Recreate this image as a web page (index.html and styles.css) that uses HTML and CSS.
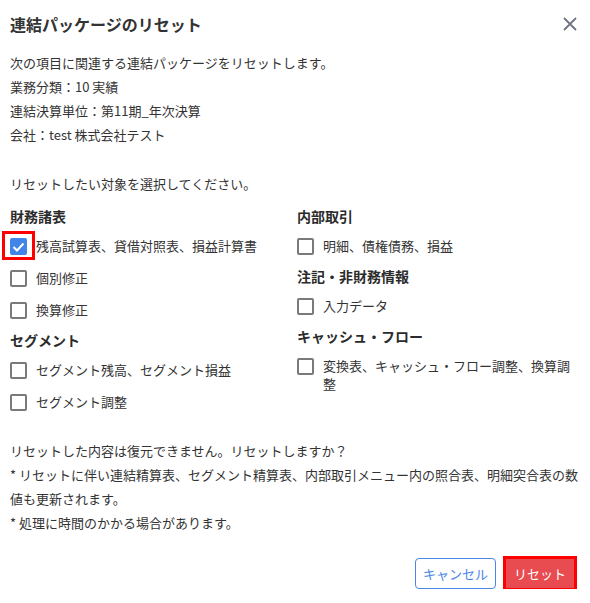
FILE: index.html
```html
<!doctype html>
<html lang="ja">
 <head>
  <meta charset="utf-8">
  <title>連結パッケージのリセット</title>
  <link rel="stylesheet" href="styles.css">
 </head>
 <body>
  <div class="dialog">
   <div class="dialog-header">
    <h1 class="dialog-title">連結パッケージのリセット</h1>
    <button class="dialog-close" type="button" aria-label="閉じる">
     <svg width="14" height="14" viewBox="0 0 14 14"><path d="M1 1L13 13M13 1L1 13" stroke="#6e7385" stroke-width="1.8" fill="none"/></svg>
    </button>
   </div>

   <div class="dialog-body">
    <p class="info">
     次の項目に関連する連結パッケージをリセットします。<br>
     業務分類：10 実績<br>
     連結決算単位：第11期_年次決算<br>
     会社：test 株式会社テスト
    </p>

    <p class="lead">リセットしたい対象を選択してください。</p>

    <div class="targets">
     <div class="target-col">
      <h2 class="group-title">財務諸表</h2>
      <label class="check-row">
       <span class="checkbox is-checked is-marked"><svg width="13" height="10" viewBox="0 0 13 10"><path d="M1.5 5L5 8.5L11.5 1.5" stroke="#fff" stroke-width="2" fill="none"/></svg></span>
       <span class="check-label">残高試算表、貸借対照表、損益計算書</span>
      </label>
      <label class="check-row">
       <span class="checkbox"></span>
       <span class="check-label">個別修正</span>
      </label>
      <label class="check-row">
       <span class="checkbox"></span>
       <span class="check-label">換算修正</span>
      </label>

      <h2 class="group-title">セグメント</h2>
      <label class="check-row">
       <span class="checkbox"></span>
       <span class="check-label">セグメント残高、セグメント損益</span>
      </label>
      <label class="check-row">
       <span class="checkbox"></span>
       <span class="check-label">セグメント調整</span>
      </label>
     </div>

     <div class="target-col">
      <h2 class="group-title">内部取引</h2>
      <label class="check-row">
       <span class="checkbox"></span>
       <span class="check-label">明細、債権債務、損益</span>
      </label>

      <h2 class="group-title">注記・非財務情報</h2>
      <label class="check-row">
       <span class="checkbox"></span>
       <span class="check-label">入力データ</span>
      </label>

      <h2 class="group-title">キャッシュ・フロー</h2>
      <label class="check-row">
       <span class="checkbox"></span>
       <span class="check-label">変換表、キャッシュ・フロー調整、換算調整</span>
      </label>
     </div>
    </div>

    <p class="notice">
     リセットした内容は復元できません。リセットしますか？<br>
     * リセットに伴い連結精算表、セグメント精算表、内部取引メニュー内の照合表、明細突合表の数値も更新されます。<br>
     * 処理に時間のかかる場合があります。
    </p>
   </div>

   <div class="dialog-footer">
    <button class="btn btn-outline" type="button">キャンセル</button>
    <button class="btn btn-danger is-marked" type="button">リセット</button>
   </div>
  </div>
 </body>
</html>
```

FILE: styles.css
```css
body {
	margin: 0;
	padding: 0;
	background-color: #ffffff;
	font-family: "Noto Sans CJK JP", "Noto Sans", sans-serif;
	font-size: 13px;
	color: #333333;
}

.dialog {
	width: 590px;
	padding: 0 10px;
	box-sizing: border-box;
}

.dialog-header {
	height: 48px;
	display: flex;
	align-items: center;
	justify-content: space-between;
}

.dialog-title {
	margin: 0;
	font-size: 16px;
	font-weight: bold;
	line-height: 24px;
	color: #333333;
}

.dialog-close {
	display: flex;
	padding: 0;
	margin-right: 3px;
	border: 0;
	background: none;
}

.dialog-body {
	padding-top: 3px;
}

.info,
.lead,
.notice {
	margin: 0;
	line-height: 24px;
}

.lead {
	margin-top: 25px;
}

/* target list, two columns */
.targets {
	display: grid;
	grid-template-columns: 287px 1fr;
	margin-top: 5px;
}

.group-title {
	margin: 0;
	font-size: 14px;
	font-weight: bold;
	line-height: 30px;
	color: #2b2b2b;
}

.check-row {
	display: flex;
	align-items: flex-start;
	gap: 9px;
	padding: 6px 0;
	line-height: 18px;
}

.check-row + .check-row {
	margin-top: 2px;
}

.checkbox {
	position: relative;
	flex: none;
	width: 17px;
	height: 17px;
	margin-top: 1px;
	border: 2px solid #7a7a7a;
	border-radius: 2px;
	box-sizing: border-box;
	display: flex;
	align-items: center;
	justify-content: center;
}

.checkbox.is-checked {
	background-color: #4285e8;
	border-color: #4285e8;
}

/* red highlight boxes from the annotated screenshot */
.checkbox.is-marked::after {
	content: "";
	position: absolute;
	top: -9px;
	right: -10px;
	bottom: -7px;
	left: -10px;
	border: 3px solid #ff0000;
}

.btn.is-marked {
	outline: 3px solid #ff0000;
}

.notice {
	margin-top: 22px;
}

.dialog-footer {
	display: flex;
	justify-content: flex-end;
	align-items: center;
	gap: 10px;
	margin-top: 23px;
	padding-right: 6px;
}

.btn {
	font-family: inherit;
	font-size: 13px;
	border-radius: 4px;
	padding: 0 7px;
	cursor: pointer;
}

.btn-outline {
	height: 31px;
	border: 1px solid #4a86e8;
	background: #ffffff;
	color: #4a86e8;
}

.btn-danger {
	height: 29px;
	padding: 0 8px;
	border: 0;
	border-radius: 0;
	background: #e84b50;
	color: #ffffff;
}
```
